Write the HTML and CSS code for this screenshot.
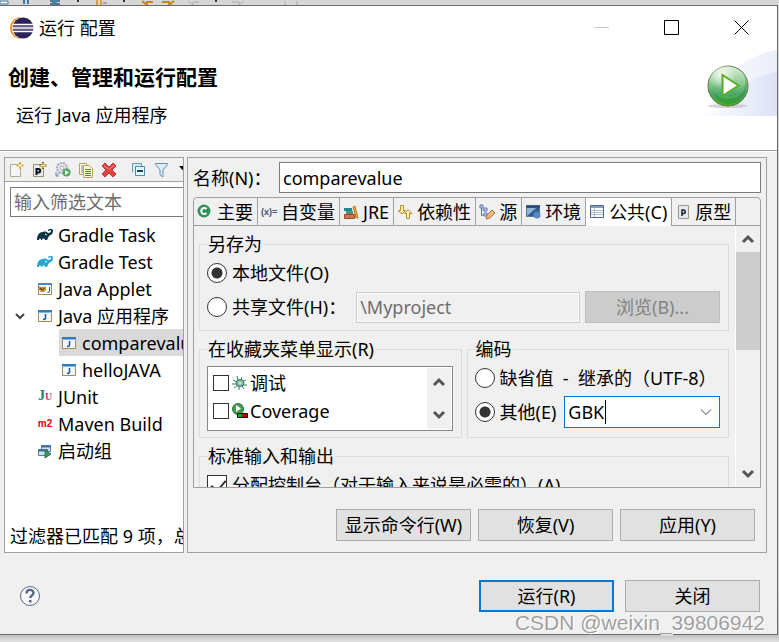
FILE: index.html
```html
<!DOCTYPE html>
<html lang="zh-CN">

<head>
    <meta charset="UTF-8">
    <meta name="viewport" content="width=device-width, initial-scale=1.0">
    <title>运行 配置</title>
    <link rel="stylesheet" href="styles.css">
</head>

<body>
    <svg class="backdrop" viewBox="0 0 300 5" width="300" height="5" aria-hidden="true">
        <path d="M0 1h8v3H0z" fill="#fff" stroke="#3c78a8" />
        <path d="M24 0v4M28 0v4" stroke="#3c78a8" stroke-width="2" />
        <path d="M50 1h10M50 4h10" stroke="#5a6f9a" stroke-width="2" />
        <path d="M52 0h5v3h-5z" fill="#3d8a9a" />
        <path d="M97 5V0M101 5V0" stroke="#d8a02c" stroke-width="2" />
        <path d="M103 3h4" stroke="#777" />
        <path d="M77 1h2M123 1h2M215 1h2" stroke="#333" stroke-width="2" />
        <path d="M142 1l5 4V2h6M174 1l-5 4V2h-7" fill="none" stroke="#c28a1c" stroke-width="2" />
        <path d="M188 1l5 4V2h6M244 1l-5 4V2h-7M285 1v4M297 1v4" fill="none" stroke="#aaa" />
    </svg>

    <div class="window">
        <header class="titlebar">
            <svg class="app-icon" viewBox="0 0 24 24" width="24" height="24">
                <circle cx="11" cy="12" r="11" fill="#f7941e" />
                <circle cx="13" cy="12" r="11" fill="#fff" />
                <circle cx="13" cy="12" r="10.500" fill="#2c2255" />
                <path d="M3 8.500h20M2 12h22M3 15.500h20" stroke="#fff" stroke-width="1.500" />
                <path d="M3 10.200h20M3 13.800h20" stroke="#8480ac" />
            </svg>
            <span class="window-title">运行 配置</span>
            <button class="window-button" aria-label="最小化" disabled>
                <svg viewBox="0 0 16 16" width="16" height="16"><path d="M0 7.500h15" stroke="#c8c8c8" /></svg>
            </button>
            <button class="window-button" aria-label="最大化">
                <svg viewBox="0 0 16 16" width="16" height="16"><path d="M.5.5h14v14H.5z" fill="none" stroke="#000" /></svg>
            </button>
            <button class="window-button" aria-label="关闭窗口">
                <svg viewBox="0 0 16 16" width="16" height="16"><path d="M.5.5l14 14M14.500.5l-14 14" stroke="#000" /></svg>
            </button>
        </header>

        <div class="banner">
            <div class="banner-text">
                <h1>创建、管理和运行配置</h1>
                <p>运行 Java 应用程序</p>
            </div>
            <svg viewBox="0 0 75 67" width="75" height="67" aria-hidden="true">
                <defs>
                    <linearGradient id="sky">
                        <stop offset="0" stop-color="#fff" />
                        <stop offset="1" stop-color="#dbe2f6" />
                    </linearGradient>
                    <linearGradient id="ball" x1="0" y1="0" x2="0" y2="1">
                        <stop offset="0" stop-color="#d9efd6" />
                        <stop offset=".4" stop-color="#93cf98" />
                        <stop offset=".7" stop-color="#4ba768" />
                        <stop offset="1" stop-color="#48b414" />
                    </linearGradient>
                    <radialGradient id="shine">
                        <stop offset="0" stop-color="#fff" stop-opacity=".8" />
                        <stop offset="1" stop-color="#fff" stop-opacity="0" />
                    </radialGradient>
                </defs>
                <path d="M0 67C15 45 25 10 75 1v66z" fill="url(#sky)" opacity=".6" />
                <path d="M0 67c20-5 35-38 75-44v44z" fill="url(#sky)" />
                <ellipse cx="26" cy="57" rx="20" ry="2" fill="#bbb" opacity=".6" />
                <circle cx="26" cy="37" r="20" fill="url(#ball)" stroke="#5d7444" />
                <path d="M42 26c4 12-1 24-16 24-9 0-13-4-15-8 2 9 9 13 16 13 14 0 22-15 15-29z" fill="#258a45" opacity=".5" />
                <circle cx="20" cy="26" r="14" fill="url(#shine)" />
                <path d="M20.500 26v21l16-10.500z" fill="#fff" stroke="#58ad27" stroke-width="2" />
            </svg>
        </div>

        <main>
            <section class="panel config-list">
                <div class="toolbar">
                    <button aria-label="新建配置">
                        <svg viewBox="0 0 16 16" width="16" height="16"><path d="M1.500 2.500h7l3 3v9h-10z" fill="#f3f5f8" stroke="#b3ab91" /><path d="M11 0v7M7.500 3.500h7" stroke="#d9ad45" stroke-width="2" /><path d="M11 2v3M9.500 3.500h3" stroke="#fff3b0" /></svg>
                    </button>
                    <button aria-label="新建原型">
                        <svg viewBox="0 0 16 16" width="16" height="16"><path d="M1.500 2.500h10v12h-10z" fill="#e4ecf5" stroke="#9c9473" /><path d="M4.500 13V7h2a1.500 1.500 0 010 3.500h-2" fill="none" stroke="#111" stroke-width="2" /><path d="M11 0v7M7.500 3.500h7" stroke="#87640f" stroke-width="2" /><path d="M11 1v5M8.500 3.500h5" stroke="#fff0a8" /></svg>
                    </button>
                    <button aria-label="导出">
                        <svg viewBox="0 0 16 16" width="16" height="16"><circle cx="7" cy="6" r="5" fill="#e7e8ee" stroke="#a6abbc" stroke-width="2" stroke-dasharray="2 1" /><circle cx="7" cy="6" r="2" fill="#fff" stroke="#a6abbc" /><path d="M1 10v4h3M1 14l3-3" fill="none" stroke="#7087ae" /><circle cx="11.500" cy="10.500" r="4" fill="#4fa960" /><path d="M10 8v5l4-2.500z" fill="#fff" /></svg>
                    </button>
                    <button aria-label="复制">
                        <svg viewBox="0 0 16 16" width="16" height="16"><path d="M1.500 1.500h7v11h-7z" fill="#fff9dc" stroke="#b7a263" /><path d="M3 4h3M3 6h3M3 8h3M3 10h3" stroke="#6f88b5" /><path d="M5.500 3.500h6l3 3v9h-9z" fill="#fff9dc" stroke="#b7a263" /><path d="M7 7.500h6M7 9.500h6M7 11.500h6M7 13.500h6" stroke="#526f9e" /></svg>
                    </button>
                    <button aria-label="删除">
                        <svg viewBox="0 0 16 16" width="16" height="16"><path d="M1 4l3-3 4 4 4-4 3 3-4 4 4 4-3 3-4-4-4 4-3-3 4-4z" fill="#df4441" stroke="#c1383b" /><path d="M3 3.500l5 4 5-4" fill="none" stroke="#f28983" /></svg>
                    </button>
                    <span class="separator"></span>
                    <button aria-label="全部折叠">
                        <svg viewBox="0 0 16 16" width="16" height="16"><path d="M1.500 10.500v-9h9v3" fill="#d5edfa" stroke="#66a0bd" /><path d="M4.500 4.500h9v9h-9z" fill="#e6f6fd" stroke="#4e8bad" /><path d="M6 9h6" stroke="#164668" stroke-width="2" /></svg>
                    </button>
                    <button aria-label="过滤">
                        <svg viewBox="0 0 16 16" width="16" height="16"><path d="M1.500 1.500h12v1l-4.500 5.500v7l-3-2V8L1.500 2.500z" fill="#dcecf7" stroke="#668fae" /></svg>
                    </button>
                    <button aria-label="过滤菜单">
                        <svg viewBox="0 0 16 16" width="16" height="16"><path d="M2 4h7L5.500 8z" fill="#000" /></svg>
                    </button>
                </div>
                <input class="filter" type="text" placeholder="输入筛选文本" aria-label="输入筛选文本">
                <ul class="tree">
                    <li>
                        <svg viewBox="0 0 16 16" width="16" height="16"><path d="M0 13c0-5 2-8 6-8 2-1 4 0 5 1 2 0 3-1 3-2 0-1-2-1-2 0h-1c0-3 5-3 5 0 0 3-2 4-4 5l-2 4h-2c0-2-3-2-3 0H4c0-2-2-2-2 0z" fill="#0b3440" /><path d="M8 7l2 1" stroke="#fff" /></svg>
                        Gradle Task
                    </li>
                    <li>
                        <svg viewBox="0 0 16 16" width="16" height="16"><path d="M0 13c0-5 2-8 6-8 2-1 4 0 5 1 2 0 3-1 3-2 0-1-2-1-2 0h-1c0-3 5-3 5 0 0 3-2 4-4 5l-2 4h-2c0-2-3-2-3 0H4c0-2-2-2-2 0z" fill="#28a9cc" /><path d="M8 7l2 1" stroke="#fff" /></svg>
                        Gradle Test
                    </li>
                    <li>
                        <svg viewBox="0 0 16 16" width="16" height="16"><path d="M1.500 2.500h13v11h-13z" fill="#fff" stroke="#a08b55" /><path d="M1 3h14" stroke="#438bc5" stroke-width="2" /><path d="M2 5l2 1h3l2-1v4L7 11H4L2 9z" fill="#c68a35" /><path d="M3 7l2 2 2-2" fill="none" stroke="#473015" /><path d="M12.500 6v4q0 1.500-2 1.500" fill="none" stroke="#24598f" /></svg>
                        Java Applet
                    </li>
                    <li class="open">
                        <svg class="twistie" viewBox="0 0 10 10" width="10" height="10"><path d="M1 3l4 4 4-4" fill="none" stroke="#404040" stroke-width="2" /></svg>
                        <svg viewBox="0 0 16 16" width="16" height="16"><use href="#java-app" /></svg>
                        Java 应用程序
                    </li>
                    <li class="child selected">
                        <svg viewBox="0 0 16 16" width="16" height="16"><use href="#java-app" /></svg>
                        comparevalue
                    </li>
                    <li class="child">
                        <svg viewBox="0 0 16 16" width="16" height="16"><use href="#java-app" /></svg>
                        helloJAVA
                    </li>
                    <li>
                        <span class="glyph junit">J<i>U</i></span>
                        JUnit
                    </li>
                    <li>
                        <span class="glyph maven">m2</span>
                        Maven Build
                    </li>
                    <li>
                        <svg viewBox="0 0 16 16" width="16" height="16"><path d="M4.500 2.500h9v6h-9z" fill="#cfe3f0" stroke="#547c9e" /><path d="M4 3.500h10" stroke="#426f98" stroke-width="2" /><path d="M1.500 6.500h9v6h-9z" fill="#cfe3f0" stroke="#547c9e" /><path d="M1 7.500h10" stroke="#426f98" stroke-width="2" /><path d="M8 7v8l6-4z" fill="#3c9b64" stroke="#28744a" /></svg>
                        启动组
                    </li>
                </ul>
                <p class="status">过滤器已匹配 9 项，总共 9 项</p>
            </section>

            <section class="panel editor">
                <div class="name-row">
                    <label for="name">名称(N)：</label>
                    <input id="name" type="text" value="comparevalue">
                </div>

                <div class="tab-folder">
                    <div class="tabs" role="tablist">
                        <button role="tab">
                            <svg viewBox="0 0 16 16" width="16" height="16"><circle cx="7" cy="7" r="6.500" fill="#35915a" /><path d="M9.500 5a3 3 0 100 4" fill="none" stroke="#fff" stroke-width="2" /></svg>
                            主要
                        </button>
                        <button role="tab"><span class="glyph vars">(x)=</span>自变量</button>
                        <button role="tab">
                            <svg viewBox="0 0 16 16" width="16" height="16"><path d="M1.500 10.500h10v4h-10z" fill="#cf744b" stroke="#974c30" /><path d="M3 7h7v3H3z" fill="#3b9a88" /><path d="M1 4h8v3H1z" fill="#347f91" /><path d="M10 3l2-1 3 12h-2z" fill="#edaa38" stroke="#bd7822" /></svg>
                            JRE
                        </button>
                        <button role="tab">
                            <svg viewBox="0 0 16 16" width="16" height="16"><path d="M3.500 1.500h3v5h2L5 10 1 6.500h2.500z" fill="#fff3b4" stroke="#bf891e" /><path d="M9.500 14.500h3v-5h2.500L11 5.500l-3.500 4h2z" fill="#fff3b4" stroke="#bf891e" /></svg>
                            依赖性
                        </button>
                        <button role="tab">
                            <svg viewBox="0 0 16 16" width="16" height="16"><path d="M2.500 2v10M2.500 6H6M2.500 11H6" fill="none" stroke="#5a75ab" /><path d="M1 1h3v3H1zM5 4h3v3H5zM5 9h3v3H5z" fill="#c7d4ec" stroke="#5a75ab" /><path d="M7 15l1-4 5-5 3 3-5 5z" fill="#efb781" stroke="#b4733e" /></svg>
                            源
                        </button>
                        <button role="tab">
                            <svg viewBox="0 0 16 16" width="16" height="16"><path d="M1.500 1.500h13v11h-13z" fill="#315d94" stroke="#53749b" /><path d="M1 2.500h14" stroke="#294772" stroke-width="2" /><path d="M2 12l9-8H2z" fill="#91b5da" /><circle cx="12" cy="11" r="3.500" fill="#5689bf" /></svg>
                            环境
                        </button>
                        <button role="tab" class="active" aria-selected="true">
                            <svg viewBox="0 0 16 16" width="16" height="16"><path d="M1.500 1.500h13v12h-13z" fill="#fff" stroke="#50678e" /><path d="M2 3h12" stroke="#839cc2" stroke-width="2" /><path d="M2 6.500h12M2 8.500h12M2 10.500h12M5.500 4v9" stroke="#a9b9d2" /></svg>
                            公共(C)
                        </button>
                        <button role="tab">
                            <svg viewBox="0 0 16 16" width="16" height="16"><path d="M3.500 1.500h10v13h-10z" fill="#dfe9f7" stroke="#a19976" /><path d="M7 12V6h1.500a1.500 1.500 0 010 3.500H7" fill="none" stroke="#222" stroke-width="1.500" /></svg>
                            原型
                        </button>
                    </div>

                    <div class="tab-body">
                        <form class="tab-content">
                            <fieldset>
                                <legend>另存为</legend>
                                <div class="row">
                                    <input type="radio" id="local" name="save" checked>
                                    <label for="local">本地文件(O)</label>
                                </div>
                                <div class="row">
                                    <input type="radio" id="shared" name="save">
                                    <label for="shared">共享文件(H)：</label>
                                    <input class="path" type="text" value="\Myproject" aria-label="共享文件位置" disabled>
                                    <button class="button" type="button" disabled>浏览(B)...</button>
                                </div>
                            </fieldset>

                            <div class="columns">
                                <fieldset>
                                    <legend>在收藏夹菜单显示(R)</legend>
                                    <div class="favorites">
                                        <div class="favorites-items">
                                            <div class="item">
                                                <input type="checkbox" id="debug">
                                                <label for="debug">
                                                    <svg viewBox="0 0 16 16" width="16" height="16"><path d="M5 1l1 4M10 2L9 5M1 5l4 2M0 9h5M2 13l4-3M7 15v-4M12 14l-2-3M15 10h-4M14 5l-4 2" stroke="#357c7b" /><ellipse cx="8" cy="8" rx="4" ry="3.500" fill="#86bd99" stroke="#2e7776" /><circle cx="8" cy="8" r="1.500" fill="#cfe7b5" /></svg>
                                                    调试
                                                </label>
                                            </div>
                                            <div class="item">
                                                <input type="checkbox" id="coverage">
                                                <label for="coverage">
                                                    <svg viewBox="0 0 16 16" width="16" height="16"><circle cx="6" cy="6" r="5.500" fill="#439d50" stroke="#28733a" /><path d="M4 2v7l5-3.500z" fill="#fff" /><path d="M5.500 10.500h10v4h-10z" fill="#c00000" stroke="#111" /><path d="M6 11h4v3H6z" fill="#00b000" /></svg>
                                                    Coverage
                                                </label>
                                            </div>
                                        </div>
                                        <div class="scrollbar">
                                            <svg viewBox="0 0 24 24" width="24" height="28"><use href="#arrow-up" /></svg>
                                            <svg viewBox="0 0 24 24" width="24" height="28"><use href="#arrow-down" /></svg>
                                        </div>
                                    </div>
                                </fieldset>

                                <fieldset>
                                    <legend>编码</legend>
                                    <div class="row">
                                        <input type="radio" id="default" name="encoding">
                                        <label for="default">缺省值&nbsp; - &nbsp;继承的（UTF-8）</label>
                                    </div>
                                    <div class="row">
                                        <input type="radio" id="other" name="encoding" checked>
                                        <label for="other">其他(E)</label>
                                        <div class="combo">
                                            <input type="text" value="GBK" role="combobox" aria-expanded="false" aria-label="其他编码">
                                            <button type="button" aria-label="选择编码">
                                                <svg viewBox="0 0 12 12" width="12" height="12"><path d="M1 3.500l5 5 5-5" fill="none" stroke="#444" /></svg>
                                            </button>
                                        </div>
                                    </div>
                                </fieldset>
                            </div>

                            <fieldset>
                                <legend>标准输入和输出</legend>
                                <div class="row">
                                    <input type="checkbox" id="console" checked>
                                    <label for="console">分配控制台（对于输入来说是必需的）(A)</label>
                                </div>
                            </fieldset>
                        </form>
                        <div class="scrollbar">
                            <svg viewBox="0 0 24 24" width="24" height="26"><use href="#arrow-up" /></svg>
                            <span class="thumb"></span>
                            <svg viewBox="0 0 24 24" width="24" height="26"><use href="#arrow-down" /></svg>
                        </div>
                    </div>
                </div>

                <div class="editor-buttons">
                    <button class="button">显示命令行(W)</button>
                    <button class="button">恢复(V)</button>
                    <button class="button">应用(Y)</button>
                </div>
            </section>
        </main>

        <footer>
            <button class="help" aria-label="帮助">
                <svg viewBox="0 0 20 20" width="20" height="20"><circle cx="10" cy="10" r="9.500" fill="#f5f7fa" stroke="#566787" /><path d="M6.500 7.500c0-5 7-4.500 7-.5 0 2.500-3.300 2.500-3.300 5" fill="none" stroke="#566787" stroke-width="2.400" /><path d="M9 14h2.500v2.500H9z" fill="#566787" /></svg>
            </button>
            <button class="button primary">运行(R)</button>
            <button class="button">关闭</button>
        </footer>
    </div>

    <span class="watermark">CSDN @weixin_39806942</span>

    <svg class="symbols" width="0" height="0" aria-hidden="true">
        <symbol id="java-app" viewBox="0 0 16 16">
            <path d="M1.500 2.500h13v11h-13z" fill="#f1f8fc" stroke="#a08b55" />
            <path d="M1 3h14" stroke="#3779b0" stroke-width="2" />
            <path d="M1 4.500h14" stroke="#7cb9e4" />
            <path d="M8.500 6v4q0 1.500-2.500 1.500" fill="none" stroke="#24598f" stroke-width="1.500" />
        </symbol>
        <symbol id="arrow-up" viewBox="0 0 24 24">
            <path d="M7 15l5-5 5 5" fill="none" stroke="#555" stroke-width="3" />
        </symbol>
        <symbol id="arrow-down" viewBox="0 0 24 24">
            <path d="M7 9l5 5 5-5" fill="none" stroke="#555" stroke-width="3" />
        </symbol>
    </svg>
</body>

</html>
```

FILE: styles.css
```css
:root {
    --face: #f0f0f0;
    --line: #a0a0a0;
    --group-line: #dcdcdc;
    --button-face: #e1e1e1;
    --button-line: #adadad;
    --accent: #0078d7;
}

* {
    box-sizing: border-box;
}

body {
    margin: 0;
    height: 100vh;
    padding: 0 1px 7px 0;
    display: flex;
    flex-direction: column;
    position: relative;
    overflow: hidden;
    background: linear-gradient(#d6d6d6 90%, #c4c4c4 99%, #e4e4e4);
    color: #000;
    font-family: "Noto Sans", "Noto Sans CJK SC", sans-serif;
    font-size: 18px;
    line-height: 24px;
}

button,
input {
    font: inherit;
    color: inherit;
    margin: 0;
}

button {
    padding: 0;
    border: none;
    background: none;
}

h1,
p,
ul {
    margin: 0;
    padding: 0;
}

svg {
    display: block;
    flex: none;
}

.symbols {
    position: absolute;
}

.window {
    flex: 1;
    min-height: 0;
    display: flex;
    flex-direction: column;
    background: var(--face);
    border: 1px solid #6b6b6b;
    border-left: none;
}

/* Title bar */
.titlebar {
    display: flex;
    align-items: center;
    height: 43px;
    padding-left: 10px;
    background: #fff;
}

.window-title {
    flex: 1;
    margin-left: 5px;
}

.window-button {
    width: 70px;
    height: 43px;
    display: flex;
    align-items: center;
    justify-content: center;
}

/* Banner */
.banner {
    display: flex;
    justify-content: space-between;
    height: 102px;
    background: #fff;
    border-bottom: 1px solid var(--line);
}

.banner-text {
    padding: 14px 8px;
}

h1 {
    font-size: 21px;
    line-height: 28px;
}

.banner-text p {
    margin: 12px 8px 0;
}

/* Panels */
main {
    flex: 1;
    min-height: 0;
    display: flex;
    gap: 3px;
    padding: 5px 10px 0 4px;
    border-top: 1px solid #fff;
}

.panel {
    border: 1px solid var(--line);
    display: flex;
    flex-direction: column;
}

.config-list {
    flex: 0 0 180px;
    overflow: hidden;
    background: #fff;
}

.toolbar {
    display: flex;
    align-items: center;
    gap: 7px;
    height: 24px;
    padding-left: 4px;
    background: var(--face);
    border-bottom: 1px solid var(--line);
}

.separator {
    width: 1px;
    height: 18px;
    background: #8c8c8c;
}

.filter {
    flex: none;
    width: 240px;
    height: 30px;
    margin: 5px 5px 4px;
    padding: 0 3px;
    border: 1px solid #7a7a7a;
}

.filter::placeholder {
    color: #6d6d6d;
    opacity: 1;
}

.tree {
    flex: 1;
    list-style: none;
}

.tree li {
    display: flex;
    align-items: center;
    gap: 5px;
    height: 27px;
    padding-left: 32px;
    white-space: nowrap;
}

.tree .open {
    padding-left: 10px;
}

.tree .twistie {
    margin-right: 7px;
}

.tree .child {
    margin-left: 54px;
    padding-left: 2px;
}

.tree .selected {
    background: #d9d9d9;
}

.glyph {
    flex: none;
    width: 16px;
    font-weight: bold;
    text-align: center;
}

.junit {
    font-family: "Liberation Serif", serif;
    font-size: 14px;
    color: #28805a;
}

.junit i {
    font-size: 10px;
    font-style: normal;
    color: #b83a5e;
}

.maven {
    font-family: "Liberation Sans", sans-serif;
    font-size: 10px;
    color: #e80000;
}

.vars {
    font-family: "Liberation Sans", sans-serif;
    font-size: 9px;
    color: #3f5684;
}

.status {
    padding: 4px 5px;
    white-space: nowrap;
}

/* Editor */
.editor {
    flex: 1;
    min-width: 0;
    padding: 4px 5px 5px;
}

.name-row {
    display: flex;
    align-items: center;
    gap: 5px;
}

.name-row label {
    flex: 0 0 81px;
    white-space: nowrap;
}

.name-row input {
    flex: 1;
    min-width: 0;
    height: 31px;
    padding: 0 3px;
    border: 1px solid #7a7a7a;
}

.tab-folder {
    flex: 1;
    min-height: 0;
    display: flex;
    flex-direction: column;
    margin-top: 4px;
    border: 1px solid var(--line);
    border-radius: 4px 4px 0 0;
}

.tabs {
    display: flex;
    height: 28px;
    border-bottom: 1px solid var(--line);
}

.tabs button {
    display: flex;
    align-items: center;
    gap: 4px;
    height: 27px;
    padding: 0 4px 0 3px;
    border-right: 1px solid var(--line);
    white-space: nowrap;
}

.tabs .active {
    height: 28px;
    background: #fff;
}

.tab-body {
    flex: 1;
    min-height: 0;
    display: flex;
}

.tab-content {
    flex: 1;
    min-width: 0;
    overflow: hidden;
    padding: 6px 6px 0 5px;
    display: flex;
    flex-direction: column;
    gap: 6px;
}

.scrollbar {
    width: 25px;
    display: flex;
    flex-direction: column;
    background: var(--face);
    border-left: 1px solid #fff;
}

.scrollbar svg:last-child {
    margin-top: auto;
}

.thumb {
    height: 98px;
    background: #cdcdcd;
}

fieldset {
    flex: none;
    min-width: 0;
    margin: 0;
    padding: 0 8px 6px 7px;
    border: 1px solid var(--group-line);
}

legend {
    height: 24px;
    padding: 0 1px;
    white-space: nowrap;
}

.row {
    display: flex;
    align-items: center;
    gap: 5px;
    height: 34px;
    white-space: nowrap;
}

.columns {
    display: grid;
    grid-template-columns: 1fr 1fr;
    gap: 5px;
}

input[type="radio"],
input[type="checkbox"] {
    appearance: none;
    flex: none;
    width: 20px;
    height: 20px;
    border: 1px solid #333;
    background: #fff;
}

input[type="radio"] {
    border-radius: 50%;
}

input[type="radio"]:checked {
    background: radial-gradient(circle, #333 5px, #fff 6px);
}

input[type="checkbox"]:checked::before {
    content: "";
    display: block;
    width: 7px;
    height: 12px;
    margin: 1px 6px;
    border: solid #333;
    border-width: 0 2px 2px 0;
    transform: rotate(40deg);
}

.path {
    flex: 1;
    min-width: 0;
    height: 31px;
    margin-left: 5px;
    padding: 0 3px;
    border: 1px solid #ccc;
    box-shadow: inset 0 0 0 1px #fff;
    background: var(--face);
    color: #6d6d6d;
}

.button {
    flex: none;
    width: 135px;
    height: 32px;
    border: 1px solid var(--button-line);
    background: var(--button-face);
    white-space: nowrap;
}

.button:disabled {
    border-color: #bfbfbf;
    background: #ccc;
    color: #838383;
}

.button.primary {
    border: 2px solid var(--accent);
}

.favorites {
    display: flex;
    height: 65px;
    margin-top: 5px;
    padding: 1px;
    border: 1px solid #828790;
    background: #fff;
}

.favorites-items {
    flex: 1;
    padding: 1px 4px;
}

.item {
    display: flex;
    align-items: center;
    gap: 3px;
    height: 28px;
}

.item input[type="checkbox"] {
    width: 16px;
    height: 16px;
}

.item label {
    display: flex;
    align-items: center;
    gap: 2px;
}

.combo {
    flex: 1;
    min-width: 0;
    display: flex;
    height: 32px;
    margin-left: 3px;
    border: 1px solid var(--accent);
    background: #fff;
}

/* The gradient is the text caret after the value */
.combo input {
    flex: 1;
    min-width: 0;
    padding: 0 3px;
    border: none;
    outline: none;
    background: linear-gradient(#000, #000) 40px 3px / 1px 24px no-repeat;
}

.combo button {
    width: 26px;
    display: flex;
    align-items: center;
    justify-content: center;
}

.editor-buttons {
    display: flex;
    justify-content: flex-end;
    gap: 7px;
    padding: 21px 6px 6px;
}

/* Footer */
footer {
    display: flex;
    gap: 11px;
    padding: 27px 17px 22px 20px;
}

.help {
    margin-right: auto;
}

.watermark {
    position: absolute;
    right: 14px;
    bottom: 7px;
    font-family: "Liberation Sans", Arial, sans-serif;
    font-size: 21px;
    color: rgba(120, 120, 120, 0.7);
    text-shadow: 1px 1px 0 #fff;
    pointer-events: none;
}
```
